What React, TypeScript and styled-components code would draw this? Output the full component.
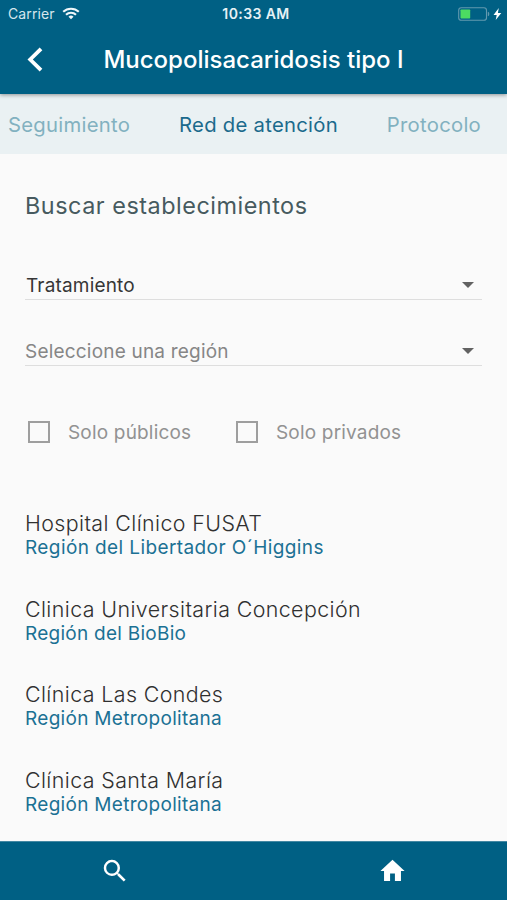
import React from 'react';
import styled, { createGlobalStyle } from 'styled-components';

const GlobalStyle = createGlobalStyle`
  * { box-sizing: border-box; }
  body { margin: 0; font-family: Inter, "Liberation Sans", sans-serif; background: #fafafa; }
  h1, h2, h3, p { margin: 0; }
  svg { display: block; flex: none; }
`;

const brand = '#006084';

const Screen = styled.div`
  display: flex;
  flex-direction: column;
  width: 507px;
  height: 900px;
  overflow: hidden;
  background: #fafafa;
`;

const TopArea = styled.header`
  flex: none;
  height: 94px;
  background: ${brand};
  color: #fff;
  box-shadow: 0 1px 4px rgba(0, 0, 0, 0.4);
  z-index: 1;
`;

const StatusBar = styled.div`
  display: grid;
  grid-template-columns: 1fr auto 1fr;
  align-items: center;
  height: 27px;
  padding: 0 5px 0 8px;
`;

const Carrier = styled.div`
  display: flex;
  align-items: center;
  gap: 7px;
  font-size: 14px;
  letter-spacing: 0.1px;
  color: #d5e6ed;
`;

const Clock = styled.div`
  padding-left: 2px;
  font-size: 14px;
  font-weight: 600;
  letter-spacing: 0.4px;
  color: #e6f1f5;
`;

const Power = styled.div`
  display: flex;
  align-items: center;
  justify-content: flex-end;
  gap: 3px;
`;

const TitleBar = styled.div`
  display: grid;
  grid-template-columns: 72px 1fr 72px;
  align-items: center;
  height: 66px;
`;

const BackButton = styled.button`
  display: flex;
  justify-content: center;
  border: 0;
  padding: 0 2px 1px 0;
  background: none;
  color: #fff;
`;

const Title = styled.h1`
  font-size: 24px;
  line-height: 30px;
  font-weight: 500;
  text-align: center;
  white-space: nowrap;
`;

const Tabs = styled.nav`
  flex: none;
  display: flex;
  justify-content: space-between;
  height: 60px;
  padding: 1px 26px 0 8px;
  background: #eaf1f3;
`;

const Tab = styled.a<{ $active?: boolean }>`
  font-size: 20.3px;
  line-height: 60px;
  letter-spacing: 0.26px;
  color: ${(p) => (p.$active ? '#1b6a8c' : '#82b1c0')};
`;

const Content = styled.main`
  flex: 1;
  min-height: 0;
  padding: 36px 25px 0;
`;

const Heading = styled.h2`
  font-size: 23.4px;
  line-height: 32px;
  font-weight: 400;
  letter-spacing: 0.52px;
  color: #475a5f;
`;

const SelectField = styled.div<{ $placeholder?: boolean }>`
  display: flex;
  align-items: center;
  justify-content: space-between;
  height: 30px;
  margin-bottom: 36px;
  padding: 1px 8px 0 ${(p) => (p.$placeholder ? '0' : '1px')};
  border-bottom: 1px solid #dedede;
  font-size: 19px;
  letter-spacing: ${(p) => (p.$placeholder ? '0.2px' : '0.17px')};
  color: ${(p) => (p.$placeholder ? '#868686' : '#363636')};
`;

const Fields = styled.div`
  margin-top: 48px;
`;

const Filters = styled.div`
  display: flex;
  margin-top: 53px;
  padding-left: 3px;
`;

const CheckLabel = styled.label`
  display: flex;
  align-items: center;
  width: 208px;
  height: 26px;
  gap: 18px;
  font-size: 19px;
  letter-spacing: 0.18px;
  color: #929292;
`;

const Checkbox = styled.span`
  width: 22px;
  height: 22px;
  border: 2px solid #9e9e9e;
`;

const Results = styled.div`
  margin-top: 67px;
`;

const Result = styled.article`
  height: 85.5px;
`;

const Name = styled.h3`
  padding-bottom: 2px;
  font-size: 21.4px;
  line-height: 22px;
  font-weight: 300;
  letter-spacing: 0.4px;
  color: #303030;
`;

const Region = styled.p<{ $spacing: number }>`
  font-size: 19px;
  line-height: 24px;
  letter-spacing: ${(p) => p.$spacing}px;
  color: #1b7194;
`;

const BottomBar = styled.footer`
  flex: none;
  display: flex;
  justify-content: space-between;
  height: 59px;
  padding: 0 100px;
  border-top: 1px solid #4388a3;
  background: ${brand};
`;

const NavButton = styled.button`
  display: flex;
  align-items: center;
  border: 0;
  padding: 0;
  background: none;
  color: #fff;
`;

const Wifi = () => (
  <svg width="18" height="13" viewBox="0 0 18 13" fill="none" stroke="#f0f7fa" strokeWidth="2.1">
    <path d="M1.2 4.8a11.3 11.3 0 0 1 15.6 0" />
    <path d="M4 7.8a7.2 7.2 0 0 1 10 0" />
    <path d="M9 12.2 6.5 9.8a3.6 3.6 0 0 1 5 0Z" fill="#f0f7fa" stroke="none" />
  </svg>
);

const Battery = () => (
  <svg width="32" height="14" viewBox="0 0 32 14">
    <rect x="0.7" y="0.7" width="27.8" height="12.6" rx="2.6" fill="none" stroke="#6299af" strokeWidth="1.1" />
    <rect x="2.5" y="2.5" width="9.7" height="9" rx="0.7" fill="#4cdb62" />
    <path d="M29.8 4.8c2 .5 2 4 0 4.5Z" fill="#6299af" />
  </svg>
);

const Bolt = () => (
  <svg width="9" height="12" viewBox="0 0 9 12" fill="#fff">
    <path d="M5.8 0 .5 6.9h3.2L2.7 12 8.3 4.9H4.9Z" />
  </svg>
);

const BackIcon = () => (
  <svg width="16" height="25" viewBox="0 0 16 25" fill="none" stroke="currentColor" strokeWidth="3.8">
    <path d="M14 1.8 3.2 12.5 14 23.2" />
  </svg>
);

const Caret = () => (
  <svg width="12" height="6" viewBox="0 0 12 6" fill="#626262">
    <path d="M0 0h12L6 6Z" />
  </svg>
);

const SearchIcon = () => (
  <svg width="30" height="30" viewBox="0 0 24 24" fill="currentColor">
    <path d="M15.5 14h-.79l-.28-.27A6.47 6.47 0 0 0 16 9.5 6.5 6.5 0 1 0 9.5 16c1.61 0 3.09-.59 4.23-1.57l.27.28v.79l5 4.99L20.49 19l-4.99-5zm-6 0C7.01 14 5 11.99 5 9.5S7.01 5 9.5 5 14 7.01 14 9.5 11.99 14 9.5 14z" />
  </svg>
);

const HomeIcon = () => (
  <svg width="29" height="30" viewBox="0 0 24 24" preserveAspectRatio="none" fill="currentColor">
    <path d="M10 20v-6h4v6h5v-8h3L12 3 2 12h3v8z" />
  </svg>
);

const results = [
  { name: 'Hospital Clínico FUSAT', region: 'Región del Libertador O´Higgins', spacing: 0.4 },
  { name: 'Clinica Universitaria Concepción', region: 'Región del BioBio', spacing: 0.26 },
  { name: 'Clínica Las Condes', region: 'Región Metropolitana', spacing: 0.3 },
  { name: 'Clínica Santa María', region: 'Región Metropolitana', spacing: 0.3 },
];

export default function App() {
  return (
    <Screen>
      <GlobalStyle />
      <TopArea>
        <StatusBar>
          <Carrier>Carrier <Wifi /></Carrier>
          <Clock>10:33 AM</Clock>
          <Power><Battery /><Bolt /></Power>
        </StatusBar>
        <TitleBar>
          <BackButton aria-label="Volver"><BackIcon /></BackButton>
          <Title>Mucopolisacaridosis tipo I</Title>
        </TitleBar>
      </TopArea>
      <Tabs>
        <Tab>Seguimiento</Tab>
        <Tab $active>Red de atención</Tab>
        <Tab>Protocolo</Tab>
      </Tabs>
      <Content>
        <Heading>Buscar establecimientos</Heading>
        <Fields>
          <SelectField>Tratamiento<Caret /></SelectField>
          <SelectField $placeholder>Seleccione una región<Caret /></SelectField>
        </Fields>
        <Filters>
          <CheckLabel><Checkbox />Solo públicos</CheckLabel>
          <CheckLabel><Checkbox />Solo privados</CheckLabel>
        </Filters>
        <Results>
          {results.map((r) => (
            <Result key={r.name}>
              <Name>{r.name}</Name>
              <Region $spacing={r.spacing}>{r.region}</Region>
            </Result>
          ))}
        </Results>
      </Content>
      <BottomBar>
        <NavButton aria-label="Buscar"><SearchIcon /></NavButton>
        <NavButton aria-label="Inicio"><HomeIcon /></NavButton>
      </BottomBar>
    </Screen>
  );
}
